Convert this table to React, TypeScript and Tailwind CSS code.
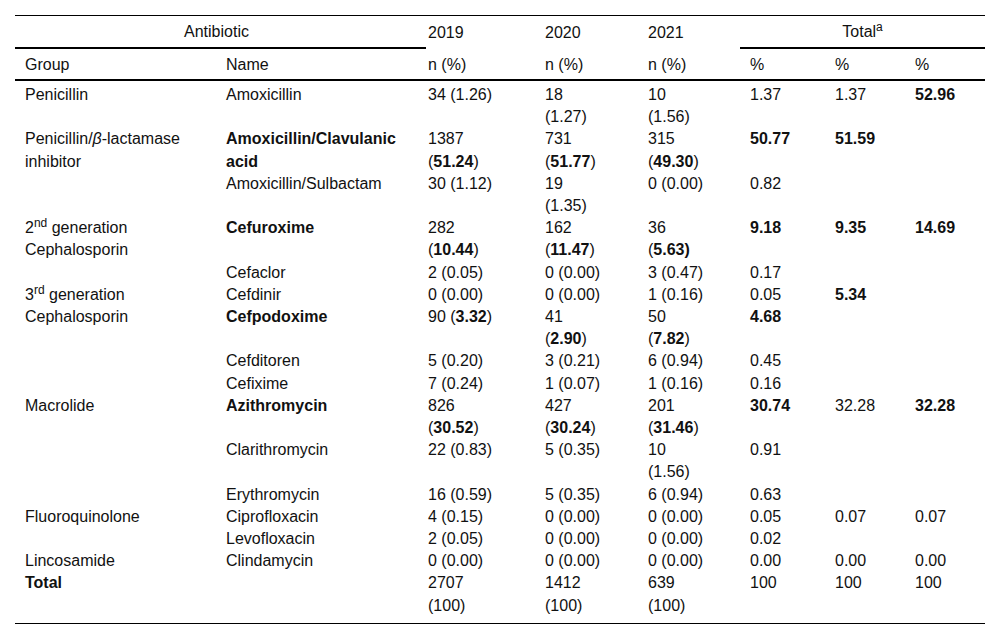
import React from "react";

type Cell = React.ReactNode;

type Row = {
  group?: Cell;
  groupSpan?: number;
  name: Cell;
  y2019: Cell;
  y2020: Cell;
  y2021: Cell;
  t1?: Cell;
  t2?: Cell;
  t3?: Cell;
  last?: boolean;
  first?: boolean;
};

const B = ({ children }: { children: React.ReactNode }) => <b className="font-bold">{children}</b>;

const rows: Row[] = [
  {
    first: true,
    group: "Penicillin",
    name: "Amoxicillin",
    y2019: "34 (1.26)",
    y2020: "18 (1.27)",
    y2021: "10 (1.56)",
    t1: "1.37",
    t2: "1.37",
    t3: <B>52.96</B>,
  },
  {
    group: (
      <>
        Penicillin/<i>β</i>-lactamase inhibitor
      </>
    ),
    groupSpan: 2,
    name: <B>Amoxicillin/Clavulanic acid</B>,
    y2019: (
      <>
        1387 (<B>51.24</B>)
      </>
    ),
    y2020: (
      <>
        731 (<B>51.77</B>)
      </>
    ),
    y2021: (
      <>
        315 (<B>49.30</B>)
      </>
    ),
    t1: <B>50.77</B>,
    t2: <B>51.59</B>,
  },
  {
    name: "Amoxicillin/Sulbactam",
    y2019: "30 (1.12)",
    y2020: "19 (1.35)",
    y2021: "0 (0.00)",
    t1: "0.82",
  },
  {
    group: (
      <>
        2<sup>nd</sup> generation Cephalosporin
      </>
    ),
    groupSpan: 2,
    name: <B>Cefuroxime</B>,
    y2019: (
      <>
        282 (<B>10.44</B>)
      </>
    ),
    y2020: (
      <>
        162 (<B>11.47</B>)
      </>
    ),
    y2021: (
      <>
        36 (<B>5.63)</B>
      </>
    ),
    t1: <B>9.18</B>,
    t2: <B>9.35</B>,
    t3: <B>14.69</B>,
  },
  {
    name: "Cefaclor",
    y2019: "2 (0.05)",
    y2020: "0 (0.00)",
    y2021: "3 (0.47)",
    t1: "0.17",
  },
  {
    group: (
      <>
        3<sup>rd</sup> generation Cephalosporin
      </>
    ),
    groupSpan: 4,
    name: "Cefdinir",
    y2019: "0 (0.00)",
    y2020: "0 (0.00)",
    y2021: "1 (0.16)",
    t1: "0.05",
    t2: <B>5.34</B>,
  },
  {
    name: <B>Cefpodoxime</B>,
    y2019: (
      <>
        90 (<B>3.32</B>)
      </>
    ),
    y2020: (
      <>
        41 (<B>2.90</B>)
      </>
    ),
    y2021: (
      <>
        50 (<B>7.82</B>)
      </>
    ),
    t1: <B>4.68</B>,
  },
  { name: "Cefditoren", y2019: "5 (0.20)", y2020: "3 (0.21)", y2021: "6 (0.94)", t1: "0.45" },
  { name: "Cefixime", y2019: "7 (0.24)", y2020: "1 (0.07)", y2021: "1 (0.16)", t1: "0.16" },
  {
    group: "Macrolide",
    groupSpan: 3,
    name: <B>Azithromycin</B>,
    y2019: (
      <>
        826 (<B>30.52</B>)
      </>
    ),
    y2020: (
      <>
        427 (<B>30.24</B>)
      </>
    ),
    y2021: (
      <>
        201 (<B>31.46</B>)
      </>
    ),
    t1: <B>30.74</B>,
    t2: "32.28",
    t3: <B>32.28</B>,
  },
  { name: "Clarithromycin", y2019: "22 (0.83)", y2020: "5 (0.35)", y2021: "10 (1.56)", t1: "0.91" },
  { name: "Erythromycin", y2019: "16 (0.59)", y2020: "5 (0.35)", y2021: "6 (0.94)", t1: "0.63" },
  {
    group: "Fluoroquinolone",
    groupSpan: 2,
    name: "Ciprofloxacin",
    y2019: "4 (0.15)",
    y2020: "0 (0.00)",
    y2021: "0 (0.00)",
    t1: "0.05",
    t2: "0.07",
    t3: "0.07",
  },
  { name: "Levofloxacin", y2019: "2 (0.05)", y2020: "0 (0.00)", y2021: "0 (0.00)", t1: "0.02" },
  {
    group: "Lincosamide",
    name: "Clindamycin",
    y2019: "0 (0.00)",
    y2020: "0 (0.00)",
    y2021: "0 (0.00)",
    t1: "0.00",
    t2: "0.00",
    t3: "0.00",
  },
  {
    last: true,
    group: <B>Total</B>,
    name: "",
    y2019: "2707 (100)",
    y2020: "1412 (100)",
    y2021: "639 (100)",
    t1: "100",
    t2: "100",
    t3: "100",
  },
];

export default function App() {
  return (
    <div
      className="min-h-[639px] w-[1000px] bg-white px-[15px] pt-[15px] text-[16px] text-[#111]"
      style={{ fontFamily: '"Liberation Sans", Arial, sans-serif' }}
    >
      <table className="w-[970px] table-fixed border-separate border-spacing-0 border-t border-b border-black">
        <colgroup>
          <col className="w-[201px]" />
          <col className="w-[202px]" />
          <col className="w-[117px]" />
          <col className="w-[103px]" />
          <col className="w-[102px]" />
          <col className="w-[85px]" />
          <col className="w-[80px]" />
          <col className="w-[80px]" />
        </colgroup>
        <thead className="leading-[22px]">
          <tr>
            <th
              colSpan={2}
              className="relative border-b-2 border-black pt-[5px] pb-[4px] text-center font-normal after:absolute after:right-[-8px] after:bottom-[-2px] after:h-[2px] after:w-[8px] after:bg-black after:content-['']"
            >
              Antibiotic
            </th>
            <th className="pl-[10px] pt-[1px] text-left align-middle font-normal">2019</th>
            <th className="pl-[10px] pt-[1px] text-left align-middle font-normal">2020</th>
            <th className="pl-[10px] pt-[1px] text-left align-middle font-normal">2021</th>
            <th colSpan={3} className="border-b-2 border-black pt-[5px] pb-[4px] text-center font-normal">
              Total<sup>a</sup>
            </th>
          </tr>
          <tr>
            {["Group", "Name", "n (%)", "n (%)", "n (%)", "%", "%", "%"].map((h, i) => (
              <th
                key={i}
                className="border-b-2 border-black pt-[5px] pb-[3px] pl-[10px] text-left font-normal"
              >
                {h}
              </th>
            ))}
          </tr>
        </thead>
        <tbody className="leading-[22.2px]">
          {rows.map((r, i) => {
            const pad = r.first ? "pt-[3px]" : r.last ? "pb-[6px]" : "";
            const cell = `align-top pl-[10px] pr-[10px] ${pad}`;
            const year = `align-top pl-[10px] pr-[35px] ${pad}`;
            return (
              <tr key={i}>
                {r.group !== undefined && (
                  <td rowSpan={r.groupSpan ?? 1} className={cell}>
                    {r.group}
                  </td>
                )}
                <td className={cell}>{r.name}</td>
                <td className={year}>{r.y2019}</td>
                <td className={year}>{r.y2020}</td>
                <td className={year}>{r.y2021}</td>
                <td className={cell}>{r.t1}</td>
                <td className={cell}>{r.t2}</td>
                <td className={cell}>{r.t3}</td>
              </tr>
            );
          })}
        </tbody>
      </table>
    </div>
  );
}
